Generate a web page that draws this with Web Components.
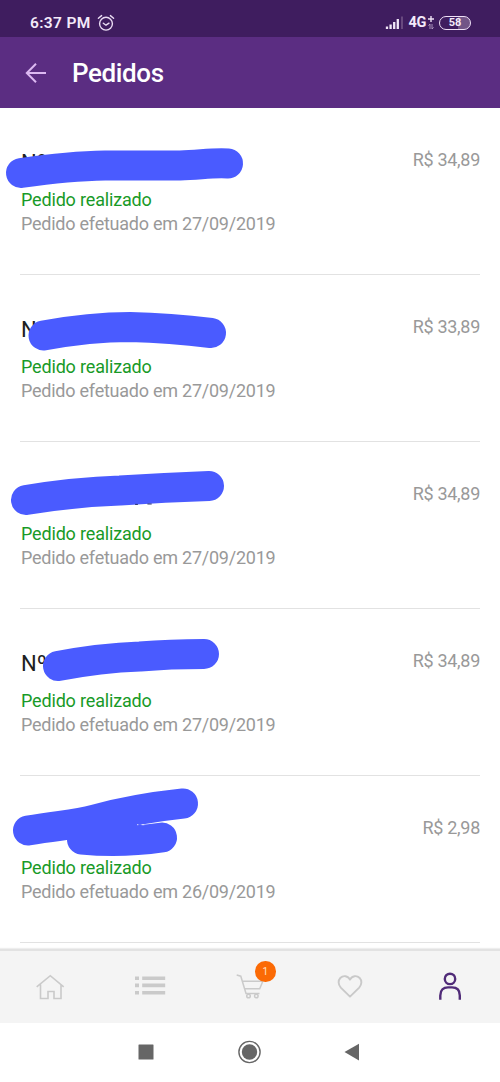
<!DOCTYPE html>
<html lang="pt-BR">
<head>
<meta charset="utf-8">
<meta name="viewport" content="width=device-width">
<title>Pedidos</title>
<style>
html,body{margin:0;height:100%;background:#fff}
body{font-family:Roboto,"Noto Sans",sans-serif;overflow:hidden}
</style>
</head>
<body>
<orders-app></orders-app>
<script>
const define = (name, html, setup) => customElements.define(name, class extends HTMLElement {
  constructor() {
    super();
    const t = document.createElement('template');
    t.innerHTML = html;
    this.attachShadow({ mode: 'open' }).append(t.content.cloneNode(true));
  }
  connectedCallback() { if (setup) setup(this, this.shadowRoot); }
});

define('status-bar', `
<style>
:host{display:flex;align-items:center;height:37px;background:#3f1d5f;color:#f4eafa;box-sizing:border-box;padding:9px 29px 0 30px;flex:none}
.time{font-size:15.500px;font-weight:600;letter-spacing:.35px;line-height:20px;white-space:nowrap}
svg{display:block;flex:none}
.alarm{margin-left:6px}
.sig{margin-left:auto}
.net{font-size:14.500px;font-weight:700;line-height:20px;margin-left:4px;letter-spacing:-.3px}
.plus{margin-left:1px}
.bat{margin-left:4px;width:32px;height:14px;box-sizing:border-box;border:1.500px solid #eee0f6;border-radius:7px;background:linear-gradient(90deg,#3f1d5f 0 60%,#725587 60%);font-size:11px;font-weight:700;line-height:12px;text-align:center}
</style>
<span class="time">6:37 PM</span>
<svg class="alarm" width="18" height="18" viewBox="0 0 18 18" fill="none" stroke="#eadcf3" stroke-width="1.400" stroke-linecap="round"><circle cx="9" cy="9.700" r="6.400"/><path d="M1.400 4.300L4.600 1.600M16.600 4.300L13.400 1.600M6.300 9.200L9 11.200L12 9.200"/></svg>
<svg class="sig" width="19" height="14" viewBox="0 0 19 14" stroke="#f0e6f6" stroke-width="2.300"><path d="M2 13v-2.500M5.600 13V8.500M9.200 13V6M12.800 13V3"/><path d="M17 13V.5" stroke="#68497f" stroke-width="2"/></svg>
<span class="net">4G</span>
<svg class="plus" width="8" height="14" viewBox="0 0 8 14" fill="none" stroke="#eee2f5"><path d="M4 0v6M1 3h6" stroke-width="1.400"/><path d="M3 13V8L1.500 9.700M5 8v5L6.500 11.300" stroke-width=".8" stroke="#c3aed2"/></svg>
<span class="bat">58</span>`);

define('app-header', `
<style>
:host{display:flex;align-items:center;height:71px;background:#5b2d82;color:#fff;box-sizing:border-box;padding:0 25px;flex:none}
svg{display:block}
h1{margin:1px 0 0 26px;font-size:26px;font-weight:500;line-height:32px;letter-spacing:-.4px}
</style>
<svg width="21" height="20" viewBox="0 0 21 20" fill="none" stroke="#dcb9f2" stroke-width="2"><path d="M21 10H2M11 .8L1.800 10l9.200 9.200"/></svg>
<h1><slot></slot></h1>`);

define('order-row', `
<style>
:host{display:block;position:relative;height:167px;flex:none;padding:0 20px;box-sizing:border-box}
.row{display:flex;justify-content:space-between;height:167px;border-bottom:1px solid #e2e2e2;box-sizing:border-box}
.info{padding:41px 0 0 1px;white-space:nowrap}
.num{height:28px;line-height:28px;font-size:22px;color:#202020}
.state{margin-top:11px;line-height:24px;font-size:18px;color:#189a27;letter-spacing:-.17px}
.date{line-height:24px;font-size:18px;color:#999;letter-spacing:-.24px}
.price{padding-top:40px;line-height:24px;font-size:18px;color:#999;letter-spacing:-.3px}
svg{position:absolute;left:0;top:0;width:500px;height:167px;overflow:visible}
</style>
<div class="row">
 <div class="info"><div class="num"></div><div class="state">Pedido realizado</div><div class="date"></div></div>
 <div class="price"></div>
</div>
<svg viewBox="0 0 500 167" fill="none" stroke="#4a5bff" stroke-width="30" stroke-linecap="round" stroke-linejoin="round"><path class="mark"/><path class="light" stroke="#e4e6ff" stroke-width="1"/><path class="dark" stroke="#27306e" stroke-width="1"/></svg>`,
(el, root) => {
  root.querySelector('.num').textContent = el.getAttribute('number') || '';
  root.querySelector('.date').textContent = 'Pedido efetuado em ' + el.getAttribute('date');
  root.querySelector('.price').textContent = 'R$ ' + el.getAttribute('price');
  for (const k of ['mark', 'light', 'dark'])
    root.querySelector('.' + k).setAttribute('d', el.getAttribute(k) || '');
});

define('tab-bar', `
<style>
:host{display:grid;grid-template-columns:repeat(5,1fr);height:74px;background:#f4f4f4;border-top:2px solid #e2e2e2;box-shadow:0 -1px 1px #eee;box-sizing:border-box;flex:none;position:relative}
.tab{display:flex;justify-content:center;padding-top:20px}
svg{display:block;width:32px;height:32px}
.cart{position:relative}
.badge{position:absolute;left:55px;top:10px;width:20.500px;height:20.500px;border-radius:50%;background:#fb6a05;color:#ffe3c8;font-size:10px;line-height:21px;text-align:center}
</style>
<div class="tab"><svg viewBox="0 0 32 32" fill="none" stroke="#cacaca" stroke-width="1.600"><path d="M2.700 15.800L16.300 4.700L29.700 15.800M6.500 13.500V27.500H14V20.500h6v7H27V13.500"/></svg></div>
<div class="tab"><svg viewBox="0 0 32 32" fill="none" stroke="#cacaca" stroke-width="3.600"><path d="M1 7.300h4M8.200 7.300h23M1 14.400h4M8.200 14.400h23M1 21.800h4M8.200 21.800h23"/></svg></div>
<div class="tab cart"><svg viewBox="0 0 32 32" fill="none" stroke="#cacaca" stroke-width="1.500"><path d="M2.700 4L6.800 5.200L12 22.500H25.500M8.300 10.200H28.800L25.500 18.200M10.700 17.700H26"/><circle cx="14.500" cy="25" r="1.800"/><circle cx="22.300" cy="25" r="1.800"/></svg><span class="badge">1</span></div>
<div class="tab"><svg viewBox="0 0 32 32" fill="none" stroke="#c9c9c9" stroke-width="1.900" stroke-linejoin="round"><path d="M16 25.600L6.800 16.600C4 13.600 4 9.400 6.300 7C9.300 4 14 4.600 16 8.700C18 4.600 22.700 4 25.700 7C28 9.400 28 13.600 25.200 16.600Z"/></svg></div>
<div class="tab"><svg viewBox="0 0 32 32" fill="none" stroke="#502b78" stroke-width="2.400"><circle cx="16" cy="7.900" r="5.200"/><path d="M6.300 28.800V24.500C6.300 19 9.500 16.400 14 16.400H18C22.500 16.400 25.800 19 25.800 24.500V28.800"/></svg></div>`);

define('system-nav', `
<style>
:host{display:flex;justify-content:center;align-items:center;height:59px;background:#fff;flex:none;box-sizing:border-box;padding:0 1px 1px 0}
svg{display:block}
</style>
<svg width="225" height="26" viewBox="0 0 225 26" fill="#666"><rect x="1.500" y="5.500" width="15" height="15" rx=".5"/><circle cx="112.500" cy="13" r="7.700"/><circle cx="112.500" cy="13" r="10.600" fill="none" stroke="#666" stroke-width="1.400"/><path d="M207.500 13L222 4.700V21.500Z"/></svg>`);

define('orders-app', `
<style>
:host{display:flex;flex-direction:column;width:500px;height:1082px;background:#fff}
main{height:841px;flex:none;overflow:hidden}
</style>
<status-bar></status-bar>
<app-header>Pedidos</app-header>
<main>
<order-row number="Nº 0" date="27/09/2019" price="34,89" mark="M21 65Q70 58 105 57.500L180 57.500C200 57 212 54.500 228 55.500"></order-row>
<order-row number="N" date="27/09/2019" price="33,89" mark="M43.500 60.500Q90 52 130 52Q170 53 211 58"></order-row>
<order-row date="27/09/2019" price="34,89" mark="M26 58Q75 50 120 48.500Q165 45.500 209 44" dark="M135.500 62.400h2M147.800 62h3.500"></order-row>
<order-row number="Nº" date="27/09/2019" price="34,89" mark="M58 57Q100 49 140 47.500Q170 45 204 45"></order-row>
<order-row date="26/09/2019" price="2,98" mark="M28 54.500C60 49 75 49 95 43.500S150 31 183 27.500M82 63.500Q120 67.500 162 61.500" light="M137.500 48.700h.5M142 48.700h2"></order-row>
</main>
<tab-bar></tab-bar>
<system-nav></system-nav>`);
</script>
</body>
</html>
